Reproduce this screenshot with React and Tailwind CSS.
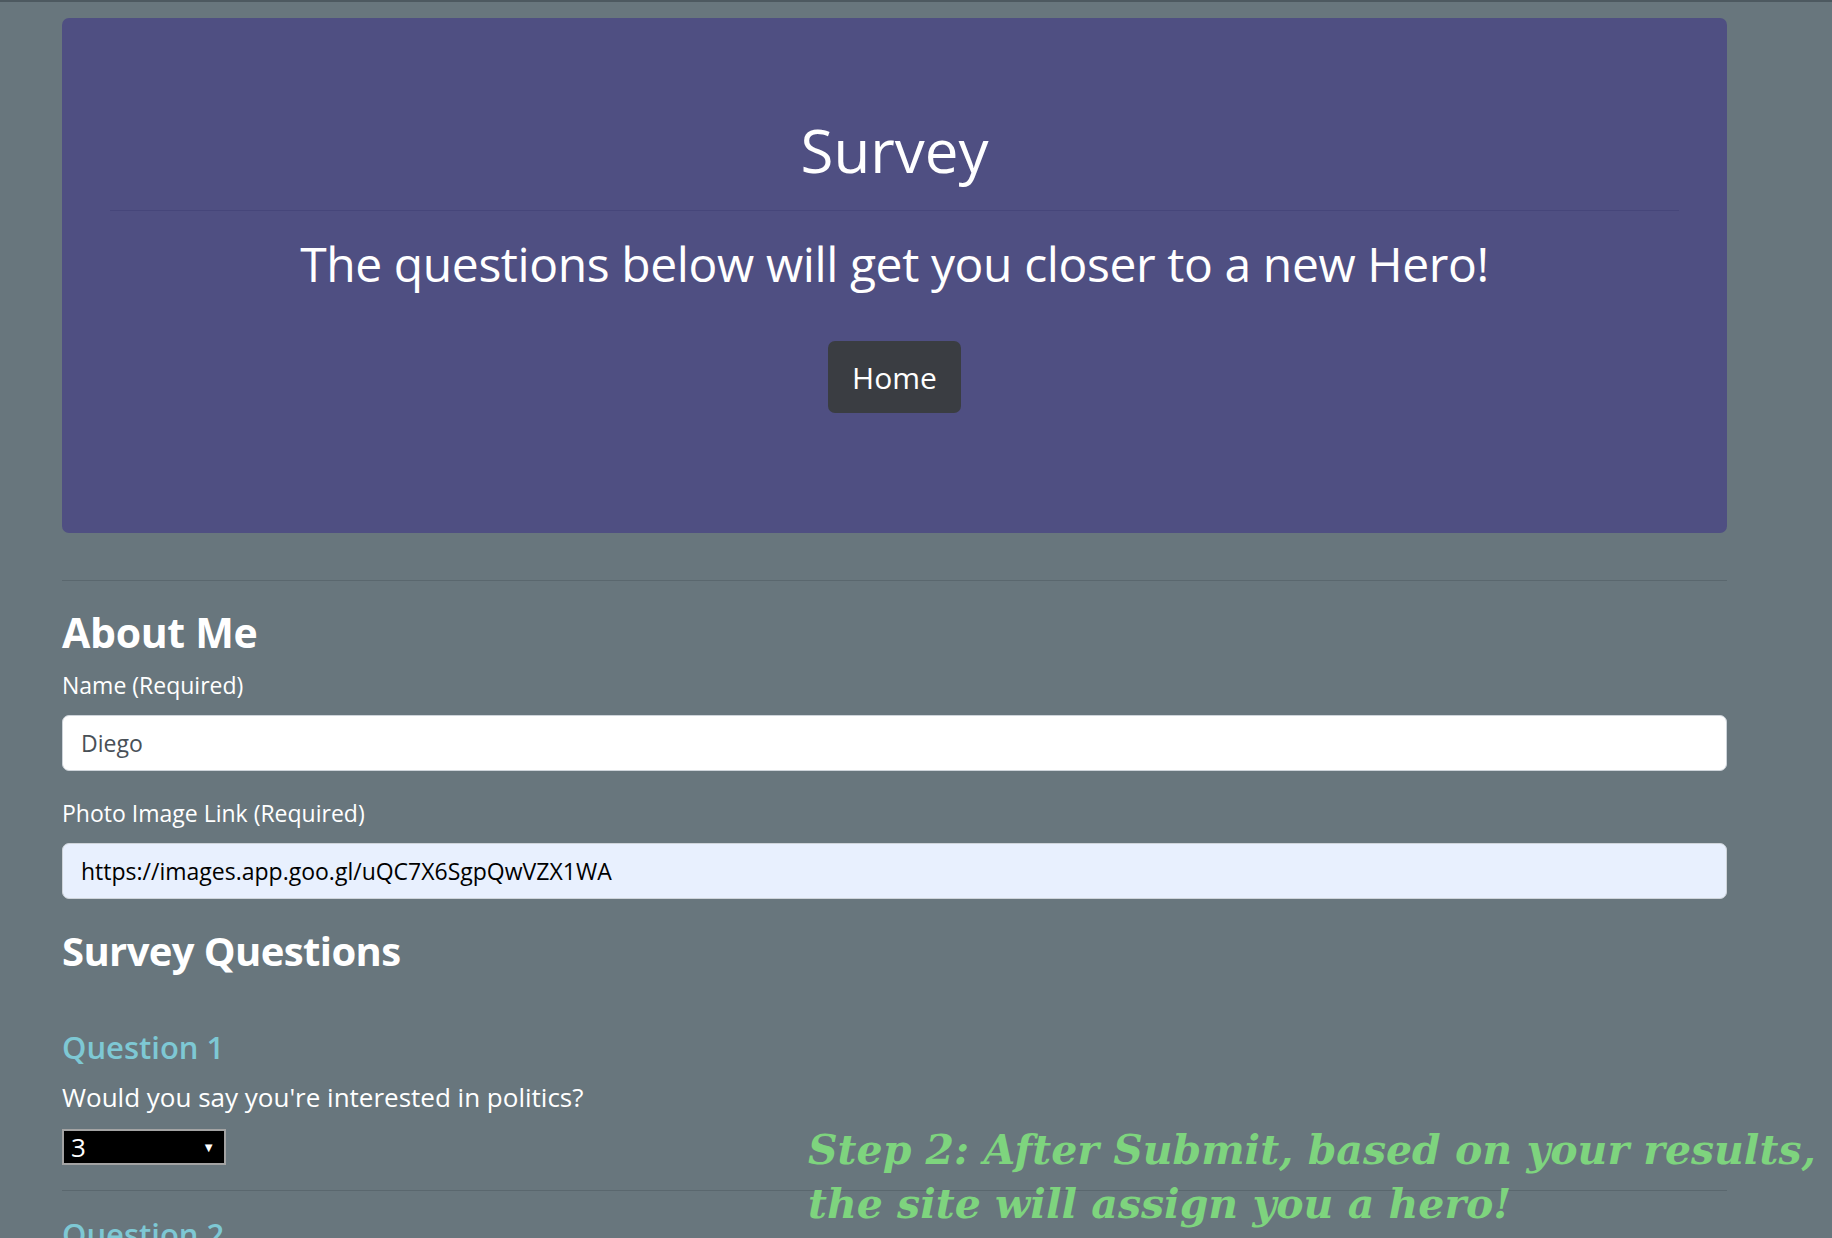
import React from "react";

export default function App() {
  return (
    <div
      className="relative h-[1238px] overflow-hidden border-t-2 border-[#4d5960] bg-[#68767d] text-white"
      style={{ fontFamily: "'Open Sans', 'Noto Sans', sans-serif" }}
    >
      <div className="ml-[62px] w-[1665px] pt-[16px]">
        <div className="rounded-[7px] bg-[#4f4f82] px-[48px] pt-[96px] pb-[120px] text-center">
          <h1 className="text-[60px] leading-[72px] font-medium mb-[24px]">Survey</h1>
          <hr className="border-0 border-t border-[#46467a] mb-[24px]" />
          <h2 className="text-[48px] leading-[58px] font-medium tracking-[-0.4px]">
            The questions below will get you closer to a new Hero!
          </h2>
          <button className="mt-[48px] h-[72px] rounded-[7px] bg-[#3a3d42] px-[24px] text-[30px] leading-[45px] text-white">
            Home
          </button>
        </div>

        <hr className="mt-[47px] border-0 border-t border-[#5a676e]" />

        <h3 className="mt-[26px] text-[41px] leading-[50px] font-bold tracking-[-0.3px] mb-[10px]">About Me</h3>
        <label className="block text-[23px] leading-[36px] mb-[12px]">Name (Required)</label>
        <div className="flex h-[56px] items-center rounded-[7px] border border-[#ced4da] bg-white px-[18px] text-[23px] text-[#495057]">
          Diego
        </div>
        <label className="mt-[24px] block text-[23px] leading-[36px] mb-[12px]">Photo Image Link (Required)</label>
        <div className="flex h-[56px] items-center rounded-[7px] border border-[#ced4da] bg-[#e8f0fe] px-[18px] text-[23px] text-black">
          https://images.app.goo.gl/uQC7X6SgpQwVZX1WA
        </div>

        <h3 className="mt-[27px] text-[40px] leading-[50px] font-bold tracking-[-0.6px]">Survey Questions</h3>

        <h5 className="mt-[52px] text-[31px] leading-[38px] font-semibold text-[#7ec8d4]">Question 1</h5>
        <p className="mt-[13px] text-[26px] leading-[36px]">Would you say you're interested in politics?</p>
        <div className="mt-[14px] flex h-[36px] w-[164px] items-center justify-between border-2 border-[#a3a3a3] bg-black pl-[7px] pr-[9px] text-[26px] leading-none text-white">
          <span>3</span>
          <span className="text-[13px]">▼</span>
        </div>
        <hr className="mt-[25px] border-0 border-t border-[#5a676e]" />
        <h5 className="mt-[24px] text-[31px] leading-[38px] font-semibold text-[#7ec8d4]">Question 2</h5>
      </div>

      <div
        className="absolute left-[808px] top-[1121px] whitespace-nowrap text-[41px] leading-[54px] font-bold italic text-[#7ed47e]"
        style={{ fontFamily: "'DejaVu Serif', serif" }}
      >
        <div>Step 2: After Submit, based on your results,</div>
        <div>the site will assign you a hero!</div>
      </div>
    </div>
  );
}
